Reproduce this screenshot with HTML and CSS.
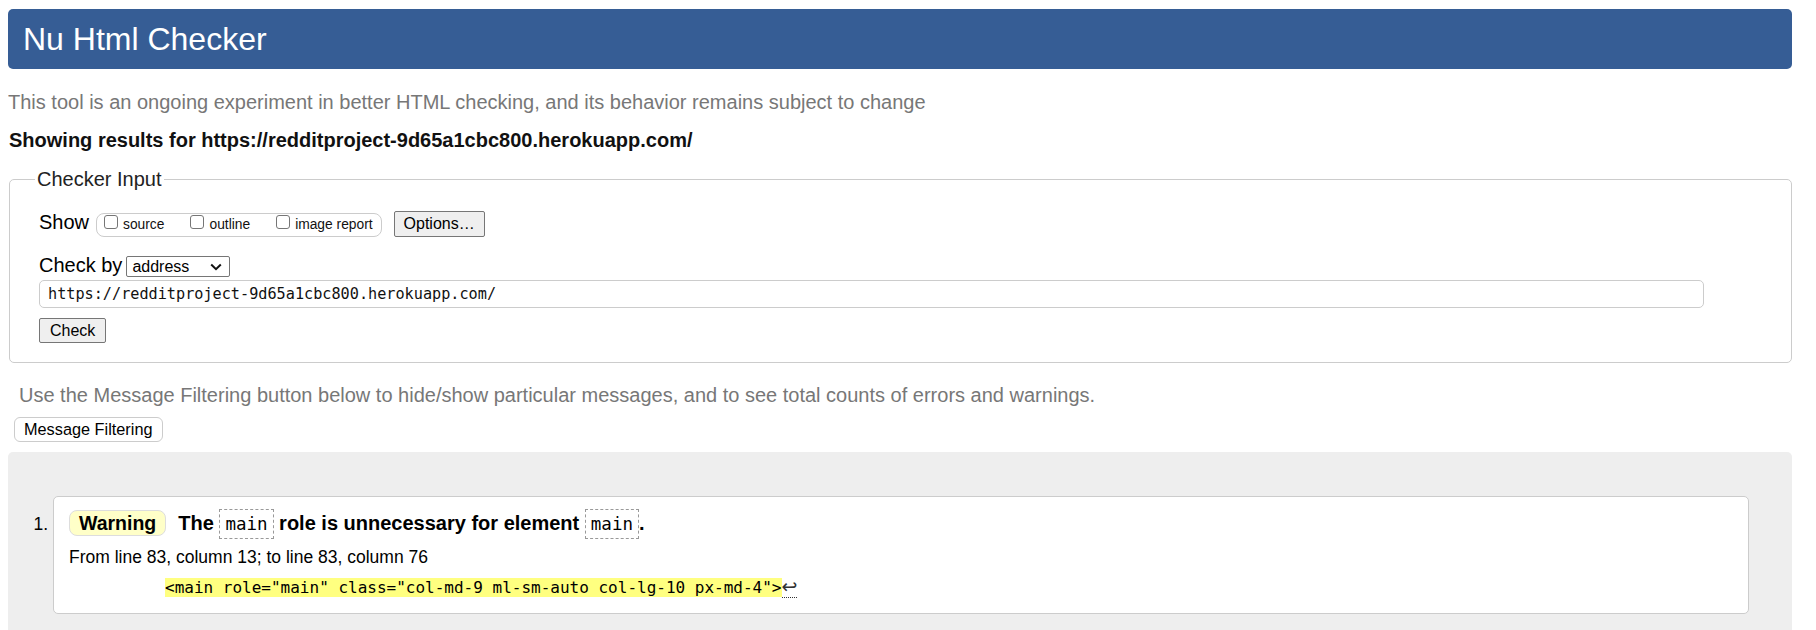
FILE: index.html
```html
<!DOCTYPE html>
<html lang="en">
<head>
<meta charset="utf-8">
<title>Nu Html Checker</title>
<link rel="stylesheet" href="styles.css">
</head>
<body>
<header class="masthead"><h1 class="title">Nu Html Checker</h1></header>
<p class="lede">This tool is an ongoing experiment in better HTML checking, and its behavior remains subject to change</p>
<p class="showing">Showing results for https://redditproject-9d65a1cbc800.herokuapp.com/</p>
<form class="checker">
  <fieldset class="input-box">
    <legend class="legend">Checker Input</legend>
    <div class="row show-row">
      <span class="lbl">Show</span>
      <span class="opts">
        <label class="opt"><span class="cb"></span>source</label>
        <label class="opt"><span class="cb"></span>outline</label>
        <label class="opt"><span class="cb"></span>image report</label>
      </span>
      <span class="btn options-btn">Options…</span>
    </div>
    <div class="row by-row">
      <span class="lbl">Check by</span>
      <span class="select">address
        <svg class="chev" width="12" height="8" viewBox="0 0 12 8"><path d="M1.2 1.5 L6 6.2 L10.8 1.5" fill="none" stroke="#111" stroke-width="2"/></svg>
      </span>
    </div>
    <div class="url">https://redditproject-9d65a1cbc800.herokuapp.com/</div>
    <span class="btn check-btn">Check</span>
  </fieldset>
</form>
<p class="note">Use the Message Filtering button below to hide/show particular messages, and to see total counts of errors and warnings.</p>
<span class="filter-btn">Message Filtering</span>
<div class="results">
  <ol class="messages">
    <li class="msg">
      <p class="msg-title"><span class="badge">Warning</span>The <code class="cd">main</code> role is unnecessary for element <code class="cd">main</code>.</p>
      <p class="loc">From line 83, column 13; to line 83, column 76</p>
      <p class="extract"><span class="hl">&lt;main role="main" class="col-md-9 ml-sm-auto col-lg-10 px-md-4"&gt;</span><span class="lf">↩</span></p>
    </li>
  </ol>
</div>
</body>
</html>
```
FILE: styles.css
```css
html, body {
  background: #fff;
}
body {
  margin: 9px 24px 0 8px;
  font-family: "Liberation Sans", Arial, sans-serif;
  color: #000;
}
.masthead {
  height: 60px;
  background: #365d95;
  border-radius: 5px;
}
.title {
  margin: 0;
  padding-left: 15px;
  font-size: 32px;
  font-weight: normal;
  line-height: 60px;
  color: #fff;
}
.lede {
  margin: 21px 0 0 0;
  font-size: 20px;
  line-height: 24px;
  color: #777;
}
.showing {
  margin: 14px 0 0 1px;
  font-size: 20px;
  line-height: 24px;
  font-weight: bold;
  color: #111;
}
.checker {
  margin: 15px 0 0 1px;
}
.input-box {
  margin: 0;
  padding: 19px 29px 19px 29px;
  border: 1px solid #ccc;
  border-radius: 5px;
}
.legend {
  margin-left: -4px;
  padding: 0 2px;
  font-size: 20px;
  line-height: 24px;
  color: #222;
}
.row {
  display: flex;
  align-items: baseline;
}
.lbl {
  font-size: 20px;
  line-height: 24px;
}
.opts {
  display: inline-flex;
  align-items: baseline;
  gap: 26px;
  height: 24px;
  box-sizing: border-box;
  margin-left: 7px;
  padding: 0 8px 0 7px;
  border: 1px solid #ccc;
  border-radius: 8px;
}
.opt {
  font-size: 13.8px;
  line-height: 22px;
  color: #111;
}
.cb {
  display: inline-block;
  width: 14px;
  height: 14px;
  box-sizing: border-box;
  margin-right: 5px;
  border: 1px solid #767676;
  border-radius: 3px;
  background: #fff;
}
.btn {
  display: inline-block;
  padding: 3px 9px;
  font-size: 16px;
  line-height: 18px;
  background: #efefef;
  border: 1px solid #767676;
  border-radius: 2px;
  color: #000;
}
.options-btn {
  margin-left: 12px;
}
.by-row {
  margin-top: 16px;
}
.select {
  display: inline-flex;
  align-items: center;
  justify-content: space-between;
  width: 104px;
  box-sizing: border-box;
  margin-left: 4px;
  padding: 0 7px 0 5px;
  font-size: 16px;
  line-height: 19px;
  border: 1px solid #767676;
  border-radius: 2px;
  background: #fff;
}
.chev {
  display: block;
}
.url {
  margin: 3px 58px 0 0;
  height: 28px;
  box-sizing: border-box;
  padding: 0 8px;
  font-family: "DejaVu Sans Mono", monospace;
  font-size: 15.2px;
  line-height: 26px;
  border: 1px solid #ccc;
  border-radius: 5px;
  color: #111;
}
.check-btn {
  margin-top: 10px;
  padding: 3px 10px;
  line-height: 17px;
}
.note {
  margin: 20px 0 0 11px;
  font-size: 20px;
  line-height: 24px;
  color: #777;
}
.filter-btn {
  display: inline-block;
  margin: 10px 0 0 6px;
  padding: 3px 9px;
  font-size: 16.3px;
  line-height: 17px;
  border: 1px solid #ccc;
  border-radius: 6px;
  background: #fff;
}
.results {
  margin-top: 10px;
  padding: 44px 0 40px 0;
  background: #eee;
  border-radius: 5px 5px 0 0;
}
.messages {
  margin: 0;
  padding: 0 43px 0 45px;
}
.msg {
  padding: 10px 15px 13px 15px;
  background: #fff;
  border: 1px solid #ccc;
  border-radius: 5px;
  font-size: 17.5px;
}
.msg::marker {
  font-size: 17.5px;
}
.msg-title {
  margin: 0;
  font-size: 20px;
  font-weight: bold;
  line-height: 32px;
}
.badge {
  display: inline-block;
  margin-right: 12px;
  padding: 2px 9px;
  font-size: 19.5px;
  line-height: 20px;
  background: #ffffc8;
  border: 1px solid #ddd;
  border-radius: 8px;
}
.cd {
  display: inline-block;
  padding: 2px 5px;
  font-family: "DejaVu Sans Mono", monospace;
  font-size: 17.5px;
  font-weight: normal;
  line-height: 24px;
  border: 1px dashed #999;
}
.loc {
  margin: 6px 0 0 0;
  font-size: 17.5px;
  line-height: 24px;
}
.extract {
  margin: 7px 0 0 96px;
  font-family: "DejaVu Sans Mono", monospace;
  font-size: 16px;
  line-height: 24px;
}
.hl {
  background: #ffff80;
}
.lf {
  font-family: "DejaVu Sans", sans-serif;
  font-size: 19px;
  line-height: 18px;
  border-bottom: 1px dotted #333;
  color: #333;
}
```
